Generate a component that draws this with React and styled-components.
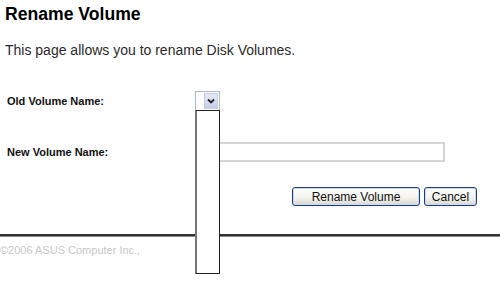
import styled, { createGlobalStyle } from "styled-components"

const Global = createGlobalStyle`
body {
  margin: 0;
  background: #fff;
  font-family: "Liberation Sans", Arial, sans-serif;
}
`;

const Page = styled.div`
width: 500px;
height: 285px;
overflow: hidden;
`;

const Content = styled.div`
padding: 0 5px;
`;

const Title = styled.h2`
margin: 2px 0 0;
font-size: 17.6px;
line-height: 24px;
font-weight: bold;
color: #000;
`;

const Desc = styled.p`
margin: 16px 0 0;
font-size: 14px;
line-height: 17px;
color: #2a2a2a;
`;

const Form = styled.div`
width: 472px;
margin-top: 32px;
display: grid;
grid-template-columns: 190px 1fr;
grid-auto-rows: auto;
row-gap: 32px;
align-items: center;
`;

const Label = styled.div`
padding-left: 2px;
font-size: 11px;
font-weight: bold;
color: #111;
`;

const SelectWrap = styled.div`
position: relative;
width: 25px;
height: 19px;
`;

const SelectBox = styled.div`
display: flex;
justify-content: flex-end;
box-sizing: border-box;
width: 25px;
height: 19px;
border: 1px solid #a9b8d6;
border-bottom: none;
background: #fff;
padding: 1px;
`;

const Arrow = styled.div`
width: 14px;
height: 16px;
box-sizing: border-box;
border: 1px solid #c3cde3;
background: linear-gradient(#e6e8f5, #c8cce6);
display: flex;
align-items: center;
justify-content: center;
`;

const DropList = styled.div`
position: absolute;
top: 19px;
left: 0;
box-sizing: border-box;
width: 25px;
height: 164px;
background: #fff;
border: 1px solid #222;
border-left: 2px solid #777;
z-index: 5;
`;

const TextInput = styled.input`
box-sizing: border-box;
width: 250px;
height: 20px;
border: 2px solid #d4d4d4;
background: #fff;
outline: none;
`;

const Actions = styled.div`
grid-column: 1 / span 2;
display: flex;
justify-content: flex-end;
gap: 4px;
margin-top: -7px;
`;

const Button = styled.button`
box-sizing: border-box;
width: ${p => p.w}px;
height: 19px;
padding: 0;
border: 1px solid #1c3f7a;
border-radius: 3px;
background: linear-gradient(#ffffff 0%, #f2f2ee 60%, #d8d8d0 100%);
box-shadow: inset 0 0 0 1px #c9d8f3;
font-family: "Liberation Sans", Arial, sans-serif;
font-size: 12px;
color: #111;
`;

const Rule = styled.div`
margin-top: 28px;
height: 2px;
background: #333;
border-bottom: 1px solid #888;
`;

const Footer = styled.div`
margin-top: 7px;
font-size: 11px;
color: #c8c8c8;
`;

export default function App() {
  return (
    <Page>
      <Global />
      <Content>
        <Title>Rename Volume</Title>
        <Desc>This page allows you to rename Disk Volumes.</Desc>
        <Form>
          <Label>Old Volume Name:</Label>
          <SelectWrap>
            <SelectBox>
              <Arrow>
                <svg width="8" height="6" viewBox="0 0 8 6">
                  <path d="M1 1.5 L4 4.5 L7 1.5" fill="none" stroke="#222" strokeWidth="1.8" />
                </svg>
              </Arrow>
            </SelectBox>
            <DropList />
          </SelectWrap>
          <Label>New Volume Name:</Label>
          <TextInput type="text" />
          <Actions>
            <Button w={128}>Rename Volume</Button>
            <Button w={53}>Cancel</Button>
          </Actions>
        </Form>
      </Content>
      <Rule />
      <Footer>©2006 ASUS Computer Inc.,</Footer>
    </Page>
  )
}
